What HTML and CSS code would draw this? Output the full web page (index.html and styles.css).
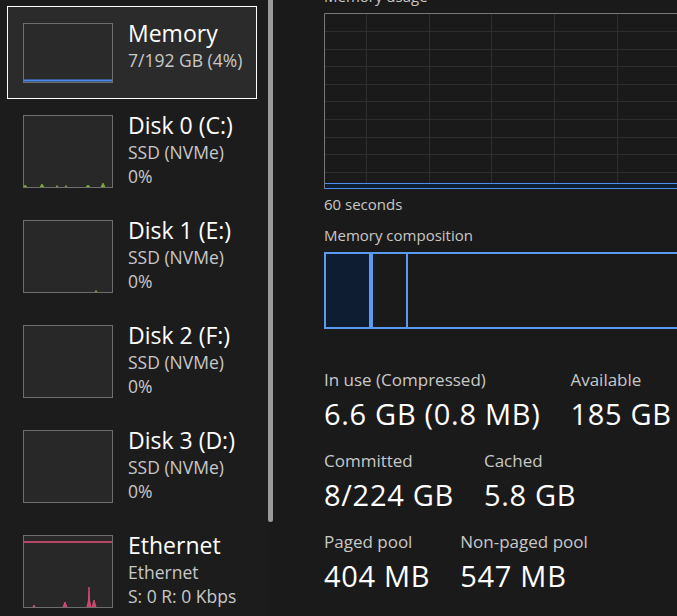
FILE: index.html
```html
<!DOCTYPE html>
<html lang="en">
<head>
    <meta charset="UTF-8">
    <meta name="viewport" content="width=device-width, initial-scale=1.0">
    <title>Task Manager - Memory</title>
    <link rel="stylesheet" href="styles.css">
</head>
<body>

<div class="window">

    <!-- Device list -->
    <div class="sidebar">
        <div class="device device-first selected">
            <svg class="thumb" width="90" height="60" viewBox="0 0 90 60">
                <rect x="0.5" y="0.5" width="89" height="59" fill="#2a2a2a" stroke="#6e6e6e"/>
                <line x1="1" y1="57.5" x2="89" y2="57.5" stroke="#4a8cf0" stroke-width="2"/>
            </svg>
            <div class="device-info">
                <div class="device-name">Memory</div>
                <div class="device-sub">7/192 GB (4%)</div>
            </div>
        </div>

        <div class="device">
            <svg class="thumb" width="90" height="73" viewBox="0 0 90 73">
                <rect x="0.5" y="0.5" width="89" height="72" fill="#282828" stroke="#6e6e6e"/>
                <path d="M1 72 L2 70 L4 72 M17 72 L19 69 L21 72 M33 72 L34 70.5 L35 72 M42 72 L43 70.5 L44 72 M63 72 L65 70 L67 72 M78 72 L80 68 L82 72" fill="#7cad35" stroke="#7cad35" stroke-width="0.8"/>
            </svg>
            <div class="device-info">
                <div class="device-name">Disk 0 (C:)</div>
                <div class="device-sub">SSD (NVMe)</div>
                <div class="device-sub">0%</div>
            </div>
        </div>

        <div class="device">
            <svg class="thumb" width="90" height="73" viewBox="0 0 90 73">
                <rect x="0.5" y="0.5" width="89" height="72" fill="#282828" stroke="#6e6e6e"/>
                <path d="M72 72 L73 70.5 L74 72" fill="#7cad35" stroke="#7cad35" stroke-width="0.8"/>
            </svg>
            <div class="device-info">
                <div class="device-name">Disk 1 (E:)</div>
                <div class="device-sub">SSD (NVMe)</div>
                <div class="device-sub">0%</div>
            </div>
        </div>

        <div class="device">
            <svg class="thumb" width="90" height="73" viewBox="0 0 90 73">
                <rect x="0.5" y="0.5" width="89" height="72" fill="#282828" stroke="#6e6e6e"/>
            </svg>
            <div class="device-info">
                <div class="device-name">Disk 2 (F:)</div>
                <div class="device-sub">SSD (NVMe)</div>
                <div class="device-sub">0%</div>
            </div>
        </div>

        <div class="device">
            <svg class="thumb" width="90" height="73" viewBox="0 0 90 73">
                <rect x="0.5" y="0.5" width="89" height="72" fill="#282828" stroke="#6e6e6e"/>
            </svg>
            <div class="device-info">
                <div class="device-name">Disk 3 (D:)</div>
                <div class="device-sub">SSD (NVMe)</div>
                <div class="device-sub">0%</div>
            </div>
        </div>

        <div class="device">
            <svg class="thumb" width="90" height="73" viewBox="0 0 90 73">
                <rect x="0.5" y="0.5" width="89" height="72" fill="#282828" stroke="#6e6e6e"/>
                <line x1="1" y1="7" x2="89" y2="7" stroke="#e8507c" stroke-width="1.5"/>
                <path d="M10 72 L11 70 L12 72 M40 72 L42 67 L44 72 M64 72 L65.5 65 L66 52 L66.5 65 L68 72 M69 72 L71 65 L73 72" fill="#c84470" stroke="#e8507c" stroke-width="0.8"/>
            </svg>
            <div class="device-info">
                <div class="device-name">Ethernet</div>
                <div class="device-sub">Ethernet</div>
                <div class="device-sub">S: 0 R: 0 Kbps</div>
            </div>
        </div>
    </div>

    <div class="scrollbar"></div>

    <!-- Memory details -->
    <div class="main">
        <div class="caption caption-top">Memory usage</div>

        <svg class="usage-graph" width="400" height="176" viewBox="0 0 400 176">
            <rect x="0" y="0" width="400" height="176" fill="#1a1a1a"/>
            <g stroke="#2e2e2e" stroke-width="1">
                <line x1="42.5" y1="0" x2="42.5" y2="176"/>
                <line x1="105.5" y1="0" x2="105.5" y2="176"/>
                <line x1="167.5" y1="0" x2="167.5" y2="176"/>
                <line x1="230.5" y1="0" x2="230.5" y2="176"/>
                <line x1="293.5" y1="0" x2="293.5" y2="176"/>
                <line x1="356.5" y1="0" x2="356.5" y2="176"/>
                <line x1="0" y1="18.5" x2="400" y2="18.5"/>
                <line x1="0" y1="36.5" x2="400" y2="36.5"/>
                <line x1="0" y1="53.5" x2="400" y2="53.5"/>
                <line x1="0" y1="71.5" x2="400" y2="71.5"/>
                <line x1="0" y1="88.5" x2="400" y2="88.5"/>
                <line x1="0" y1="106.5" x2="400" y2="106.5"/>
                <line x1="0" y1="124.5" x2="400" y2="124.5"/>
                <line x1="0" y1="141.5" x2="400" y2="141.5"/>
                <line x1="0" y1="159.5" x2="400" y2="159.5"/>
            </g>
            <rect x="0.5" y="170.5" width="400" height="5" fill="#0f1d33" stroke="#4a8cf0"/>
            <path d="M0.5 176 V0.5 H400" fill="none" stroke="#777"/>
        </svg>

        <div class="caption caption-axis">60 seconds</div>
        <div class="caption caption-comp">Memory composition</div>

        <div class="composition">
            <div class="seg seg-used"></div>
            <div class="seg seg-modified"></div>
            <div class="seg seg-free"></div>
        </div>

        <div class="stats">
            <div class="stat-row">
                <div class="stat">
                    <div class="stat-label">In use (Compressed)</div>
                    <div class="stat-value">6.6 GB (0.8 MB)</div>
                </div>
                <div class="stat">
                    <div class="stat-label">Available</div>
                    <div class="stat-value">185 GB</div>
                </div>
            </div>
            <div class="stat-row">
                <div class="stat">
                    <div class="stat-label">Committed</div>
                    <div class="stat-value">8/224 GB</div>
                </div>
                <div class="stat">
                    <div class="stat-label">Cached</div>
                    <div class="stat-value">5.8 GB</div>
                </div>
            </div>
            <div class="stat-row">
                <div class="stat">
                    <div class="stat-label">Paged pool</div>
                    <div class="stat-value">404 MB</div>
                </div>
                <div class="stat">
                    <div class="stat-label">Non-paged pool</div>
                    <div class="stat-value">547 MB</div>
                </div>
            </div>
        </div>
    </div>

</div>

</body>
</html>
```

FILE: styles.css
```css
body {
    margin: 0;
    padding: 0;
    width: 677px;
    height: 616px;
    overflow: hidden;
    background-color: #1a1a1a;
    font-family: "Open Sans", "Noto Sans", sans-serif;
    color: #ffffff;
}
.window {
    display: flex;
    height: 616px;
}
.sidebar {
    width: 261px;
    flex-shrink: 0;
    padding-left: 7px;
    padding-top: 6px;
    background-color: #1c1c1c;
}
.device {
    display: flex;
    align-items: flex-start;
    gap: 15px;
    width: 250px;
    box-sizing: border-box;
    padding: 15px 0 15px 15px;
    border: 1px solid transparent;
}
.device.selected {
    background-color: #2b2b2b;
    border-color: #ffffff;
}
.device-first {
    padding-top: 16px;
}
.thumb {
    display: block;
    flex-shrink: 0;
}
.device-info {
    margin-top: -5px;
    white-space: nowrap;
}
.device-name {
    font-size: 23px;
    line-height: 30px;
    color: #ffffff;
}
.device-sub {
    font-size: 17.5px;
    line-height: 24px;
    color: #c8c8c8;
}
.scrollbar {
    width: 5px;
    height: 522px;
    flex-shrink: 0;
    background-color: #9a9a9a;
    border-radius: 0 0 3px 3px;
}
.main {
    flex: 1;
    padding-left: 51px;
    overflow: hidden;
}
.caption {
    font-size: 15px;
    line-height: 20px;
    color: #c8c8c8;
    white-space: nowrap;
}
.caption-top {
    margin-top: -14px;
}
.usage-graph {
    display: block;
    margin-top: 7px;
}
.caption-axis {
    margin-top: 5px;
}
.caption-comp {
    margin-top: 11px;
}
.composition {
    display: flex;
    width: 400px;
    height: 77px;
    box-sizing: border-box;
    margin-top: 7px;
    border: 2px solid #5a9af2;
}
.seg-used {
    width: 43px;
    background-color: #0f1d33;
    border-right: 4px solid #5a9af2;
}
.seg-modified {
    width: 33px;
    border-right: 2px solid #5a9af2;
}
.seg-free {
    flex: 1;
}
.stats {
    margin-top: 40px;
}
.stat-row {
    display: flex;
    gap: 30px;
    margin-bottom: 19px;
    white-space: nowrap;
}
.stat-label {
    font-size: 17px;
    line-height: 22px;
    color: #c8c8c8;
}
.stat-value {
    margin-top: 6px;
    font-size: 29px;
    line-height: 34px;
    letter-spacing: 0.7px;
    color: #ffffff;
}
```
